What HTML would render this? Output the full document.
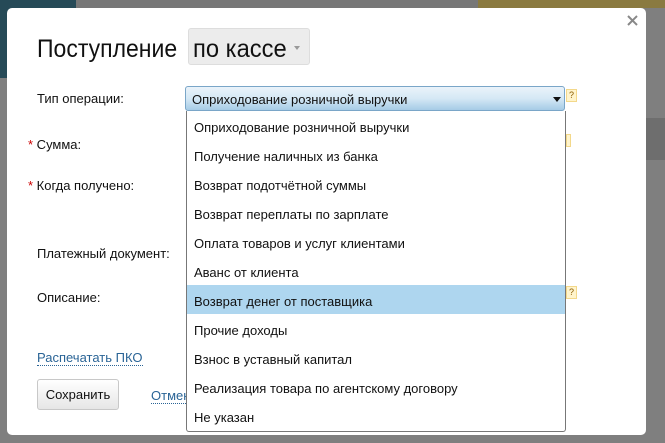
<!DOCTYPE html>
<html><head><meta charset="utf-8"><style>
body{margin:0;width:665px;height:443px;overflow:hidden;background:#7f7f7f;font-family:"Liberation Sans","DejaVu Sans",sans-serif;position:relative}
.abs{position:absolute}
.modal{left:7px;top:8px;width:639px;height:427px;background:#fff;border-radius:5px}
.lbl{font-size:13px;color:#111}
.star{color:#c00}
.list{left:186px;top:111px;width:378px;height:320px;border:1px solid #777;border-top:none;background:#fff;border-radius:0 0 3px 3px}
.it{height:29px;line-height:34px;padding-left:7px;font-size:13px;color:#111}
.q{width:9px;height:11px;background:#fff4cc;border:1px solid #f3d88a;font-size:9px;line-height:11px;text-align:center;color:#8a5a00}
</style></head><body>
<div class="abs" style="left:0;top:0;width:76px;height:78px;background:#264a57"></div>
<div class="abs" style="left:76px;top:0;width:480px;height:8px;background:#777"></div>
<div class="abs" style="left:478px;top:0;width:187px;height:8px;background:#8a7a40"></div>
<div class="abs" style="left:646px;top:118px;width:19px;height:42px;background:#6e6e6e"></div>
<div class="abs modal"></div>
<svg class="abs" style="left:627px;top:15px" width="11" height="11"><path d="M1 1L10 10M10 1L1 10" stroke="#888" stroke-width="2"/></svg>
<div class="abs" style="left:37px;top:35px;font-size:25px;color:#111;transform:scaleX(0.92);transform-origin:left">Поступление</div>
<div class="abs" style="left:188px;top:28px;width:122px;height:37px;background:#ececec;border:1px solid #ddd;border-radius:3px;box-sizing:border-box"></div>
<div class="abs" style="left:193px;top:35px;font-size:25px;color:#111;transform:scaleX(0.95);transform-origin:left">по кассе</div>
<div class="abs" style="left:294px;top:46px;width:0;height:0;border:3px solid transparent;border-top:4px solid #999"></div>
<div class="abs lbl" style="left:37px;top:91px">Тип операции:</div>
<div class="abs" style="left:185px;top:86px;width:380px;height:25px;box-sizing:border-box;border:1px solid #7aa6c8;border-radius:3px;background:linear-gradient(#eaf3fa,#d5e8f5 50%,#a6cbe6);"></div>
<div class="abs" style="left:192px;top:92px;font-size:13px;color:#111">Оприходование розничной выручки</div>
<div class="abs" style="left:553px;top:97px;width:0;height:0;border:4px solid transparent;border-top:5px solid #111"></div>
<div class="abs q" style="left:566px;top:89px">?</div>
<div class="abs q" style="left:566px;top:134px;width:3px"></div>
<div class="abs q" style="left:566px;top:286px">?</div>
<div class="abs lbl" style="left:28px;top:137px"><span class="star">*</span> Сумма:</div>
<div class="abs lbl" style="left:28px;top:178px"><span class="star">*</span> Когда получено:</div>
<div class="abs lbl" style="left:37px;top:246px">Платежный документ:</div>
<div class="abs lbl" style="left:37px;top:290px">Описание:</div>
<div class="abs" style="left:37px;top:350px;font-size:13px;color:#2a6496;border-bottom:1px dotted #2a6496;line-height:15px">Распечатать ПКО</div>
<div class="abs" style="left:37px;top:379px;width:82px;height:31px;box-sizing:border-box;border:1px solid #c8c8c8;border-radius:3px;background:linear-gradient(#fff,#e6e6e6);font-size:13px;text-align:center;line-height:29px;color:#111">Сохранить</div>
<div class="abs" style="left:151px;top:388px;font-size:13px;color:#2a6496;border-bottom:1px dotted #2a6496;line-height:15px">Отмена</div>
<div class="abs list">
<div class="it">Оприходование розничной выручки</div>
<div class="it">Получение наличных из банка</div>
<div class="it">Возврат подотчётной суммы</div>
<div class="it">Возврат переплаты по зарплате</div>
<div class="it">Оплата товаров и услуг клиентами</div>
<div class="it">Аванс от клиента</div>
<div class="it" style="background:#aed6ef">Возврат денег от поставщика</div>
<div class="it">Прочие доходы</div>
<div class="it">Взнос в уставный капитал</div>
<div class="it">Реализация товара по агентскому договору</div>
<div class="it">Не указан</div>
</div>
</body></html>
